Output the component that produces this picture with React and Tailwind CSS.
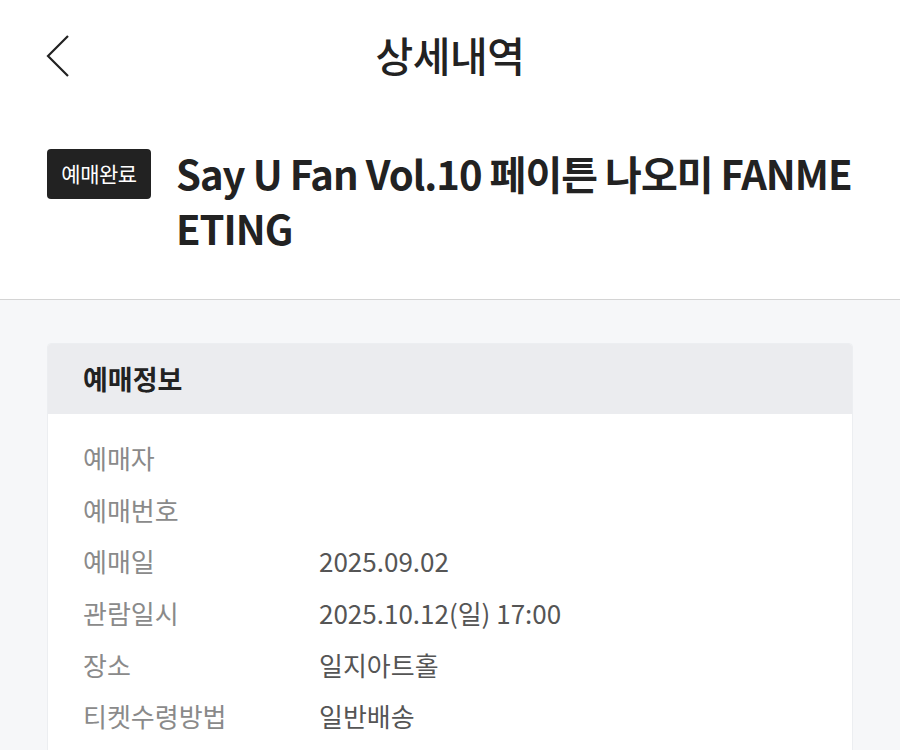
const FONT = { fontFamily: '"Noto Sans CJK KR", "Noto Sans", sans-serif' };

const ROWS = [
  { label: '예매자', value: '' },
  { label: '예매번호', value: '' },
  { label: '예매일', value: '2025.09.02' },
  { label: '관람일시', value: '2025.10.12(일) 17:00' },
  { label: '장소', value: '일지아트홀' },
  { label: '티켓수령방법', value: '일반배송' },
];

export default function App() {
  return (
    <div className="w-[900px] h-[750px] overflow-hidden bg-white flex flex-col" style={FONT}>
      {/* header */}
      <div className="relative shrink-0 h-[112px] flex items-center justify-center">
        <button className="absolute left-[46px] top-[35px] text-[#222]">
          <svg width="24" height="42" viewBox="0 0 24 42" fill="none" stroke="currentColor" strokeWidth="2.2" strokeLinecap="butt" strokeLinejoin="miter">
            <polyline points="22 1 2 21 22 41" />
          </svg>
        </button>
        <h1 className="text-[41px] font-medium text-[#222] tracking-[-0.5px] -mt-[2px]">상세내역</h1>
      </div>

      {/* title */}
      <div className="shrink-0 flex items-start gap-[25px] px-[47px] pt-[37px] pb-[43px] border-b border-[#d4d4d4]">
        <span className="shrink-0 w-[104px] h-[50px] rounded-[4px] bg-[#222] text-white text-[21px] flex items-center justify-center tracking-[-0.5px]">
          예매완료
        </span>
        <p className="flex-1 text-[40px] font-bold text-[#222] leading-[55px] break-all tracking-[-1px] -mt-[3px]">
          Say U Fan Vol.10 페이튼 나오미 FANMEETING
        </p>
      </div>

      {/* body */}
      <div className="flex-1 min-h-0 overflow-hidden bg-[#f6f7f9] px-[47px] pt-[43px]">
        <div className="rounded-[4px] overflow-hidden border border-[#eceef1] bg-white">
          <div className="h-[70px] bg-[#ebecef] flex items-center px-[35px]">
            <h2 className="text-[27px] font-bold text-[#222]">예매정보</h2>
          </div>
          <div className="px-[35px] pt-[18px] pb-[40px]">
            {ROWS.map((row) => (
              <div key={row.label} className="flex items-center h-[51.6px] text-[26px]">
                <span className="w-[236px] text-[#8a8a8a]">{row.label}</span>
                <span className="text-[#555]">{row.value}</span>
              </div>
            ))}
          </div>
        </div>
      </div>
    </div>
  );
}
